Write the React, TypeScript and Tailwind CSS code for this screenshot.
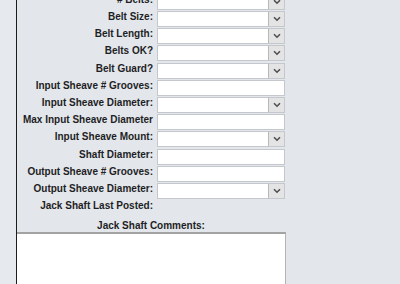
import React from "react";

type Row = { label: string; kind: "select" | "text" | "none" };

const rows: Row[] = [
  { label: "# Belts:", kind: "select" },
  { label: "Belt Size:", kind: "select" },
  { label: "Belt Length:", kind: "select" },
  { label: "Belts OK?", kind: "select" },
  { label: "Belt Guard?", kind: "select" },
  { label: "Input Sheave # Grooves:", kind: "text" },
  { label: "Input Sheave Diameter:", kind: "select" },
  { label: "Max Input Sheave Diameter", kind: "text" },
  { label: "Input Sheave Mount:", kind: "select" },
  { label: "Shaft Diameter:", kind: "text" },
  { label: "Output Sheave # Grooves:", kind: "text" },
  { label: "Output Sheave Diameter:", kind: "select" },
  { label: "Jack Shaft Last Posted:", kind: "none" },
];

function Field({ kind }: { kind: Row["kind"] }) {
  if (kind === "none") return <div />;
  return (
    <div className="mt-[1px] h-[16px] bg-white border border-[#c4c7cb] flex justify-end">
      {kind === "select" && (
        <div className="w-[16px] h-full bg-[#e4e4e4] border-l border-[#b8b8b8] flex items-center justify-center">
          <svg width="8" height="6" viewBox="0 0 8 6">
            <path d="M1 1.2 L4 4.2 L7 1.2" fill="none" stroke="#505050" strokeWidth="1.6" />
          </svg>
        </div>
      )}
    </div>
  );
}

export default function App() {
  return (
    <div
      className="w-[400px] h-[284px] overflow-hidden flex bg-[#e6e9ed] text-[#1e1e26] font-bold text-[10px] leading-[12px]"
      style={{ fontFamily: '"Liberation Sans", Arial, sans-serif' }}
    >
      <div className="w-[16px] shrink-0" />
      <div className="w-[271px] shrink-0 border-l border-[#1c1c1c] bg-[#e3e6ea] flex flex-col overflow-hidden">
        <div className="-mt-[7.2px] grid grid-cols-[137px_128px] gap-x-[3px] auto-rows-[17.2px]">
          {rows.map((r) => (
            <React.Fragment key={r.label}>
              <div className="text-right pr-[1px] pt-[1px] whitespace-nowrap">{r.label}</div>
              <Field kind={r.kind} />
            </React.Fragment>
          ))}
        </div>
        <div className="w-[268px] h-[15.6px] pt-[3.5px] text-center shrink-0">Jack Shaft Comments:</div>
        <div className="w-[269px] flex-1 bg-white border-t-2 border-t-[#a3a3a3] border-r border-r-[#b4b4b4]" />
      </div>
      <div className="flex-1 bg-[#e3e6ea]" />
    </div>
  );
}
